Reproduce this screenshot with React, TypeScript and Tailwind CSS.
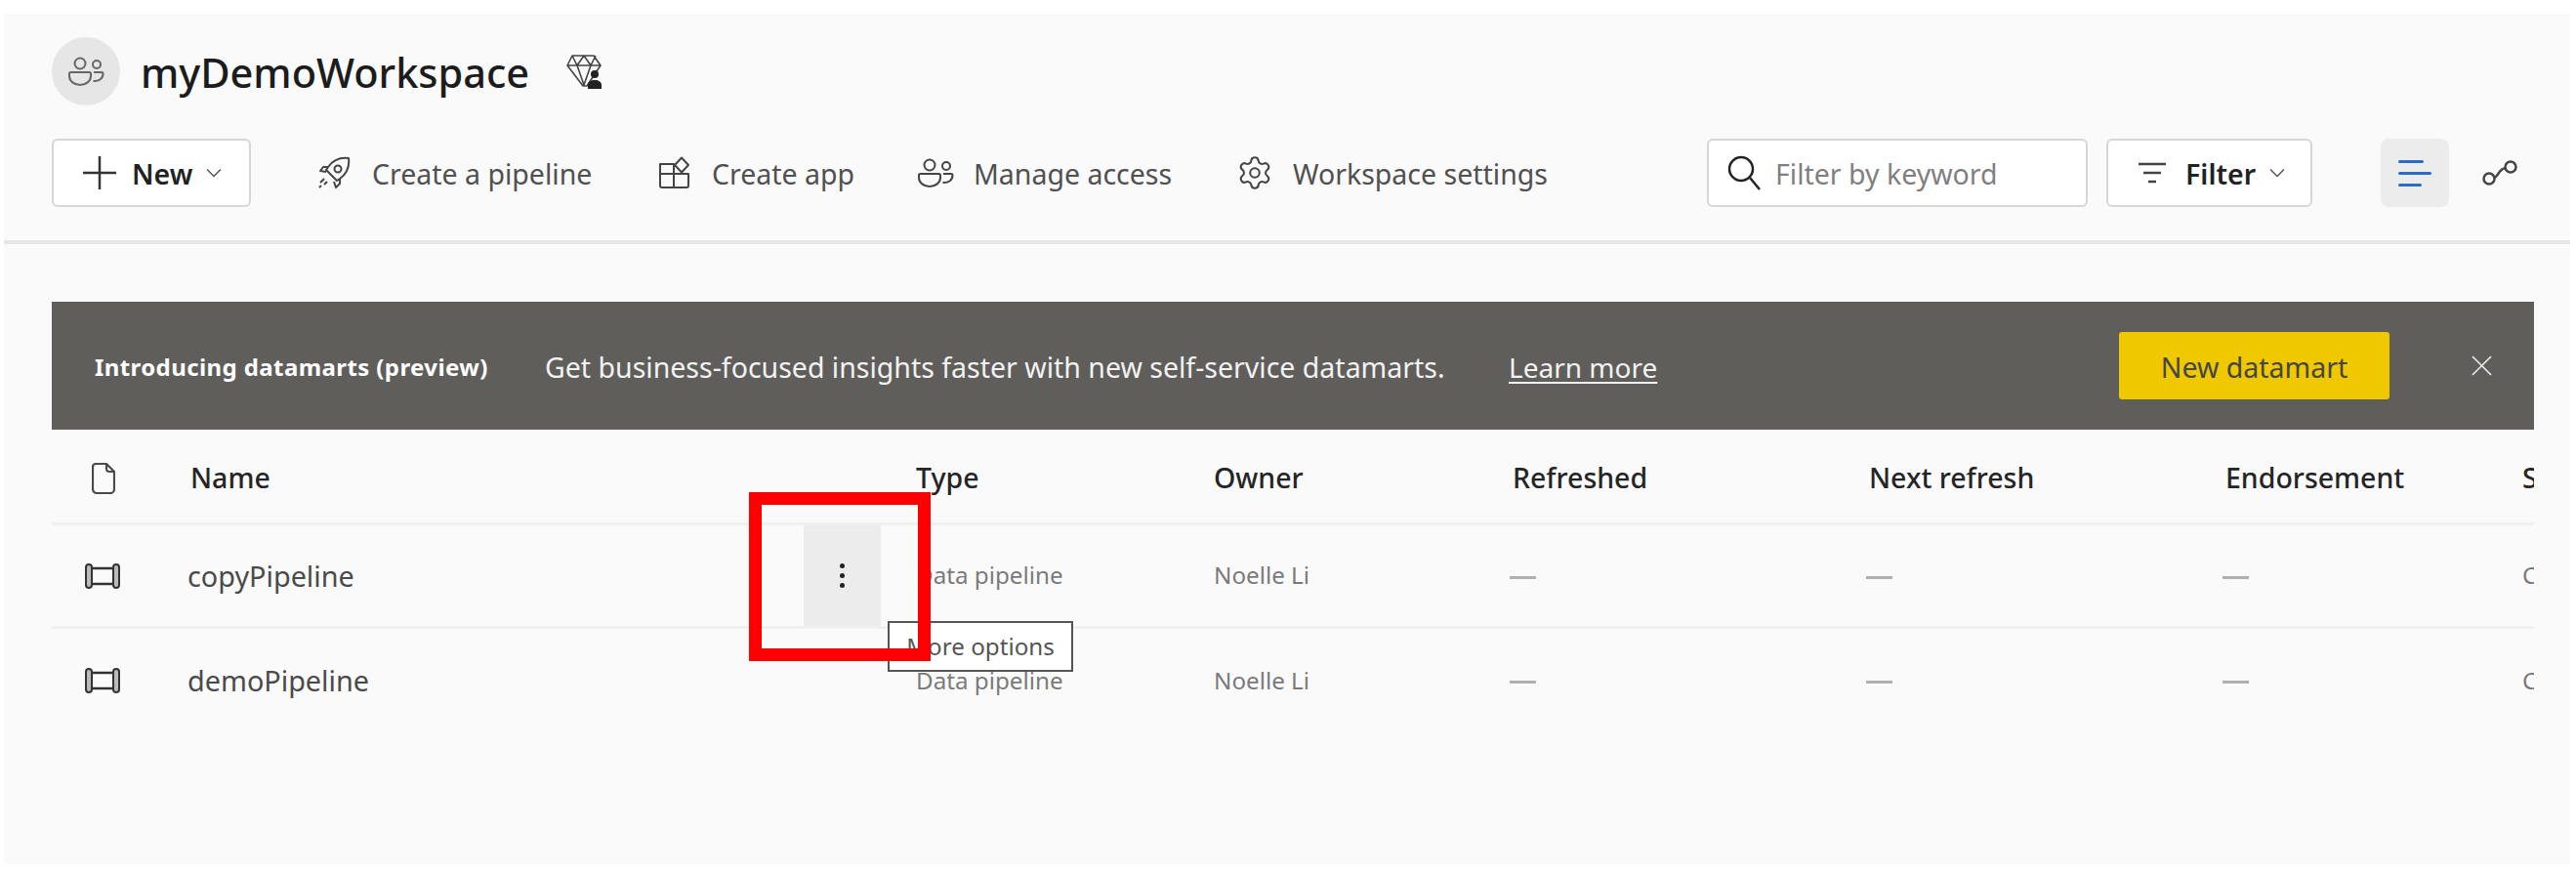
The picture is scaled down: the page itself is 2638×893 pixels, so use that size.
import { Settings } from "lucide-react";

const font = { fontFamily: '"Noto Sans", "Open Sans", sans-serif' };

const People = ({ className = "" }: { className?: string }) => (
  <svg viewBox="0 0 38 30" fill="none" stroke="currentColor" strokeWidth="2" className={className}>
    <circle cx="13" cy="7" r="5.500" />
    <circle cx="30" cy="8" r="4" />
    <path d="M2 17.500a1.500 1.500 0 0 1 1.500-1.500h19a1.500 1.500 0 0 1 1.500 1.500V20c0 5-5 9-11 9S2 25 2 20z" />
    <path d="M27 16h8a1.500 1.500 0 0 1 1.500 1.500c0 5-4 8-10 7.500" />
  </svg>
);

const Rocket = () => (
  <svg viewBox="0 0 34 34" fill="none" stroke="#444" strokeWidth="2" className="w-[34px] h-[34px] shrink-0">
    <path d="M11 11C16 4 24 1 32 2c1 8-2 16-9 21l-3 2-11-11z" strokeLinejoin="round" />
    <circle cx="21" cy="13" r="3.500" />
    <path d="M11 11H6l-3 4 6 1M23 23v5l-4 4-2-6" strokeLinejoin="round" />
    <path d="M7 23l-4 4M10 26l-3 3M4 30l-2 2" />
  </svg>
);

const AppIcon = () => (
  <svg viewBox="0 0 34 34" fill="none" stroke="#444" strokeWidth="2" className="w-[34px] h-[34px] shrink-0">
    <path d="M2 8h14v24H4a2 2 0 0 1-2-2zM16 18h15v12a2 2 0 0 1-2 2H16M2 18h14" strokeLinejoin="round" />
    <path d="M24 1.500l7 7.500-7 7.500-7-7.500z" strokeLinejoin="round" />
  </svg>
);

const Chevron = ({ className = "" }: { className?: string }) => (
  <svg viewBox="0 0 16 10" fill="none" stroke="#555" strokeWidth="1.500" className={`w-[16px] h-[10px] shrink-0 ${className}`}>
    <path d="M1 1.500l7 7 7-7" />
  </svg>
);

const PipelineIcon = () => (
  <svg viewBox="0 0 36 26" fill="none" stroke="#333" strokeWidth="2" className="w-[36px] h-[26px]">
    <rect x="1" y="1" width="6" height="24" rx="3" fill="#bbb" />
    <rect x="29" y="1" width="6" height="24" rx="3" fill="#bbb" />
    <path d="M7 5h22M7 21h22" strokeWidth="2.500" />
  </svg>
);

const Action = ({ icon, label, className = "" }: { icon: React.ReactNode; label: string; className?: string }) => (
  <div className={`flex items-center shrink-0 whitespace-nowrap text-[28.5px] text-[#505050] ${className}`}>
    {icon}
    <span className="pt-[2px]">{label}</span>
  </div>
);

const Dash = () => <div className="w-[27px] h-[3px] -ml-[3px] mt-[3px] bg-[#b0b0b0]" />;

const columns = "grid grid-cols-[139px_746px_305px_306px_365px_365px_304px_60px]";

const Row = ({ name, more, last }: { name: string; more?: boolean; last?: boolean }) => (
  <div className={`${columns} h-[106px] items-center ${last ? "" : "border-b-[3px] border-[#f0f0f0]"}`}>
    <div className="pl-[34px] flex">
      <PipelineIcon />
    </div>
    <div className="flex items-center h-full justify-between pr-[36px] text-[28.8px] text-[#4a4a4a]">
      <span>{name}</span>
      {more && (
        <div className="w-[79px] h-full bg-[#ececec] flex flex-col items-center justify-center gap-[5px]">
          <span className="w-[5px] h-[5px] rounded-full bg-[#222]" />
          <span className="w-[5px] h-[5px] rounded-full bg-[#222]" />
          <span className="w-[5px] h-[5px] rounded-full bg-[#222]" />
        </div>
      )}
    </div>
    <div className="text-[24.2px] text-[#7a7a7a] whitespace-nowrap">Data pipeline</div>
    <div className="text-[24.2px] text-[#7a7a7a] whitespace-nowrap">Noelle Li</div>
    <Dash />
    <Dash />
    <Dash />
    <div className="text-[24.2px] text-[#7a7a7a]">C</div>
  </div>
);

export default function App() {
  return (
    <div className="w-[2638px] h-[893px] bg-white pt-[14px] pl-[4px] pr-[6px] pb-[8px]" style={font}>
      <div className="relative w-full h-full bg-[#fafafa]">
        <header className="h-[236px] border-b-[4px] border-[#e6e6e6] pt-[24px] pl-[49px] pr-[54px]">
          <div className="flex items-center h-[70px]">
            <div className="w-[70px] h-[70px] shrink-0 rounded-full bg-[#e6e6e6] flex items-center justify-center text-[#666]">
              <People className="w-[38px] h-[30px]" />
            </div>
            <h1 className="ml-[21px] pt-[3px] text-[41.5px] font-medium text-[#1c1c1c] whitespace-nowrap">myDemoWorkspace</h1>
            <svg viewBox="0 0 38 36" fill="none" stroke="#444" strokeWidth="1.600" className="ml-[37px] w-[38px] h-[36px] shrink-0">
              <path d="M7 2h22l7 10-14 21h-4L2 12zM2 12h34M12 12l7 20 7-20M7 2l5 10 7-10 7 10 5-10" strokeLinejoin="round" />
              <circle cx="30" cy="21" r="4" fill="#222" stroke="none" />
              <path d="M23 36v-4c0-3 3-5 7-5s7 2 7 5v4z" fill="#222" stroke="none" />
            </svg>
          </div>
          <div className="flex items-center h-[70px] mt-[34px]">
            <button className="w-[204px] h-[70px] shrink-0 rounded-[6px] bg-white border-2 border-[#d6d6d6] flex items-center pl-[30px] text-[28.5px] font-semibold text-[#222]">
              <svg viewBox="0 0 34 34" stroke="#333" strokeWidth="2.500" className="w-[34px] h-[34px] shrink-0">
                <path d="M17 0v34M0 17h34" />
              </svg>
              <span className="ml-[16px] pt-[2px]">New</span>
              <Chevron className="ml-[14px]" />
            </button>
            <Action icon={<Rocket />} label="Create a pipeline" className="ml-[68px] w-[349px] gap-[22px]" />
            <Action icon={<AppIcon />} label="Create app" className="w-[265px] gap-[21px]" />
            <Action icon={<People className="w-[38px] h-[30px] text-[#444] shrink-0" />} label="Manage access" className="w-[327px] gap-[20px]" />
            <Action
              icon={<Settings className="w-[38px] h-[38px] text-[#444] shrink-0" strokeWidth={1.300} />}
              label="Workspace settings"
              className="gap-[20px]"
            />
            <div className="ml-auto w-[390px] h-[70px] shrink-0 rounded-[6px] bg-white border-2 border-[#d6d6d6] flex items-center pl-[19px] text-[28.5px] text-[#7f7f7f] whitespace-nowrap">
              <svg viewBox="0 0 34 36" fill="none" stroke="#222" strokeWidth="2.500" className="w-[34px] h-[36px] shrink-0">
                <circle cx="14" cy="14" r="12" />
                <path d="M23 23l10 12" />
              </svg>
              <span className="ml-[15px] pt-[2px]">Filter by keyword</span>
            </div>
            <button className="ml-[19px] w-[211px] h-[70px] shrink-0 rounded-[6px] bg-white border-2 border-[#d6d6d6] flex items-center pl-[31px] text-[28.5px] font-semibold text-[#222]">
              <svg viewBox="0 0 28 24" stroke="#444" strokeWidth="2.500" className="w-[28px] h-[24px] shrink-0">
                <path d="M0 3h28M5 12h18M10 21h8" />
              </svg>
              <span className="ml-[20px] pt-[2px]">Filter</span>
              <Chevron className="ml-[14px]" />
            </button>
            <div className="ml-[70px] w-[70px] h-[70px] shrink-0 rounded-[8px] bg-[#ececec] flex flex-col justify-center gap-[9px] pl-[18px]">
              <span className="w-[26px] h-[3px] bg-[#2b6cc4] rounded-full" />
              <span className="w-[34px] h-[3px] bg-[#2b6cc4] rounded-full" />
              <span className="w-[24px] h-[3px] bg-[#2b6cc4] rounded-full" />
            </div>
            <svg viewBox="0 0 36 28" fill="none" stroke="#444" strokeWidth="2.500" className="ml-[34px] w-[36px] h-[28px] shrink-0">
              <circle cx="7" cy="20" r="5.500" />
              <circle cx="29" cy="8" r="5.500" />
              <path d="M12 19c5-1 4-9 12-10" />
            </svg>
          </div>
        </header>

        <main className="pt-[59px] pl-[49px]">
          <div className="w-[2542px]">
            <section className="h-[131px] bg-[#5f5e5b] flex items-center text-white pl-[44px] whitespace-nowrap">
              <strong className="w-[461px] pt-[3px] text-[24px] font-bold tracking-[0.4px]">Introducing datamarts (preview)</strong>
              <span className="w-[987px] pt-[3px] text-[28.5px] text-[#f2f2f2]">Get business-focused insights faster with new self-service datamarts.</span>
              <a className="w-[625px] pt-[3px] text-[28px] underline underline-offset-4 text-[#f2f2f2]">Learn more</a>
              <button className="w-[277px] h-[69px] shrink-0 bg-[#f0c800] rounded-[3px] pt-[3px] text-[28.5px] text-[#454545]">New datamart</button>
              <svg viewBox="0 0 22 22" stroke="#f2f2f2" strokeWidth="1.600" className="ml-[84px] w-[21px] h-[21px] shrink-0">
                <path d="M1 1l20 20M21 1L1 21" />
              </svg>
            </section>

            <div className="overflow-hidden">
              <div className={`${columns} h-[98px] pt-[4px] items-center border-b-[3px] border-[#f0f0f0] text-[28.5px] font-medium text-[#252525] whitespace-nowrap`}>
                <div className="pl-[41px] flex">
                  <svg viewBox="0 0 24 32" fill="none" stroke="#4a4a4a" strokeWidth="2.200" className="w-[24px] h-[32px]">
                    <path d="M4 1h11l8 8v18a4 4 0 0 1-4 4H5a4 4 0 0 1-4-4V4a3 3 0 0 1 3-3zM15 1v5a3 3 0 0 0 3 3h5" strokeLinejoin="round" />
                  </svg>
                </div>
                <div className="pl-[3px]">Name</div>
                <div>Type</div>
                <div>Owner</div>
                <div>Refreshed</div>
                <div>Next refresh</div>
                <div>Endorsement</div>
                <div>Status</div>
              </div>
              <Row name="copyPipeline" more />
              <Row name="demoPipeline" last />
            </div>
          </div>
        </main>

        <div className="absolute left-[905px] top-[622px] w-[190px] h-[52px] bg-white border-2 border-[#555] flex items-center justify-center text-[24.2px] text-[#555]">
          More options
        </div>
        <div className="absolute left-[763px] top-[490px] w-[186px] h-[173px] border-[13px] border-[#ff0000]" />
      </div>
    </div>
  );
}
